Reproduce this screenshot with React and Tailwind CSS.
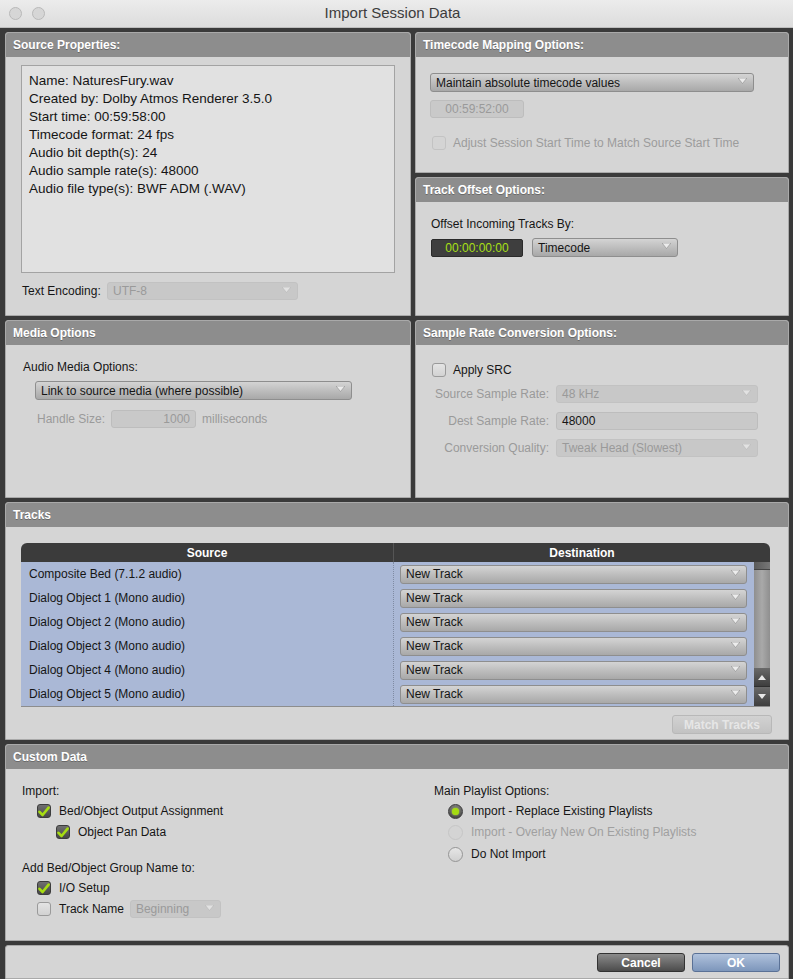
import React from 'react';

const font = { fontFamily: '"Liberation Sans", Arial, sans-serif' };

const Arrow = ({ dim }) => (
    <svg width="9" height="6" viewBox="0 0 9 6" className="mr-[6px] mt-[4px] shrink-0 self-start">
        <path d="M0 0 H9 L4.5 5.5 Z" fill={dim ? '#e2e2e2' : '#ececec'} stroke={dim ? '#b5b5b5' : '#8a8a8a'} strokeWidth="0.6" />
    </svg>
);

const Select = ({ label, className = '', disabled }) => (
    <div
        className={`flex items-center rounded-[3px] border pl-[5px] text-[12px] leading-none ${
            disabled
                ? 'border-[#c2c2c2] bg-[#c8c8c8] text-[#9a9a9a]'
                : 'border-[#8e8e8e] bg-gradient-to-b from-[#d4d4d4] to-[#a8a8a8] text-[#151515]'
        } ${className}`}
    >
        <span className="flex-1 whitespace-nowrap">{label}</span>
        <Arrow dim={disabled} />
    </div>
);

const Field = ({ children, className = '' }) => (
    <div className={`flex items-center rounded-[3px] border border-[#bdbdbd] bg-[#c9c9c9] px-[5px] text-[12px] leading-none ${className}`}>
        {children}
    </div>
);

const Check = ({ checked, disabled }) =>
    checked ? (
        <div className="flex h-[14px] w-[14px] shrink-0 items-center justify-center rounded-[3px] border border-[#3c3c3c] bg-gradient-to-b from-[#707070] to-[#474747]">
            <svg width="12" height="11" viewBox="0 0 12 11">
                <path d="M1.5 5.8 L4.6 9 L10.6 1.6" fill="none" stroke="#a6dc12" strokeWidth="2.6" strokeLinecap="round" strokeLinejoin="round" />
            </svg>
        </div>
    ) : (
        <div
            className={`h-[14px] w-[14px] shrink-0 rounded-[3px] border ${
                disabled ? 'border-[#c3c3c3] bg-[#d4d4d4]' : 'border-[#9a9a9a] bg-gradient-to-b from-[#e4e4e4] to-[#d2d2d2]'
            }`}
        />
    );

const Radio = ({ on, disabled }) =>
    on ? (
        <div className="flex h-[15px] w-[15px] shrink-0 items-center justify-center rounded-full border border-[#3a3a3a] bg-gradient-to-b from-[#7a7a7a] to-[#464646]">
            <div className="h-[7px] w-[7px] rounded-full bg-[#a4dc10] shadow-[0_0_2px_#c8f050]" />
        </div>
    ) : (
        <div
            className={`h-[15px] w-[15px] shrink-0 rounded-full border ${
                disabled ? 'border-[#c6c6c6] bg-[#d4d4d4]' : 'border-[#959595] bg-gradient-to-b from-[#e6e6e6] to-[#d0d0d0]'
            }`}
        />
    );

const Panel = ({ title, className = '', bodyClass = '', children }) => (
    <div className={`flex flex-col overflow-hidden rounded-t-[3px] border border-[#a9a9a9] bg-[#d5d5d5] ${className}`}>
        <div className="flex h-[24px] shrink-0 items-center bg-[#8d8d8d] pl-[7px] text-[12px] font-bold text-white [text-shadow:0_1px_0_#6a6a6a]">
            {title}
        </div>
        <div className={`flex-1 ${bodyClass}`}>{children}</div>
    </div>
);

const sourceLines = [
    'Name: NaturesFury.wav',
    'Created by: Dolby Atmos Renderer 3.5.0',
    'Start time: 00:59:58:00',
    'Timecode format: 24 fps',
    'Audio bit depth(s): 24',
    'Audio sample rate(s): 48000',
    'Audio file type(s): BWF ADM (.WAV)',
];

const tracks = [
    'Composite Bed (7.1.2 audio)',
    'Dialog Object 1 (Mono audio)',
    'Dialog Object 2 (Mono audio)',
    'Dialog Object 3 (Mono audio)',
    'Dialog Object 4 (Mono audio)',
    'Dialog Object 5 (Mono audio)',
];

export default function App() {
    return (
        <div className="flex h-[979px] w-[793px] flex-col overflow-hidden bg-[#3a3a3a] text-[#151515]" style={font}>
            {/* title bar */}
            <div className="flex h-[28px] shrink-0 items-center border-b border-[#bdbdbd] bg-gradient-to-b from-[#ececec] to-[#dcdcdc] px-[9px]">
                <div className="flex gap-[10px]">
                    <div className="h-[13px] w-[13px] rounded-full border border-[#b9b9b9] bg-[#d6d6d6]" />
                    <div className="h-[13px] w-[13px] rounded-full border border-[#b9b9b9] bg-[#d6d6d6]" />
                </div>
                <div className="flex-1 pr-[44px] text-center text-[15px] text-[#3c3c3c]">Import Session Data</div>
            </div>

            <div className="flex flex-1 flex-col gap-[4px] pl-[5px] pr-[4px] pt-[4px]">
                {/* row 1 */}
                <div className="flex h-[284px] gap-[4px]">
                    <Panel title="Source Properties:" className="w-[406px]" bodyClass="px-[15px] pt-[8px]">
                        <div className="h-[208px] border border-[#a3a3a3] bg-[#e1e1e1] pl-[7px] pt-[6px] text-[13.5px] leading-[18px]">
                            {sourceLines.map((l) => (
                                <div key={l}>{l}</div>
                            ))}
                        </div>
                        <div className="mt-[9px] flex h-[18px] items-center">
                            <span className="w-[86px] pl-[1px] text-[12px]">Text Encoding:</span>
                            <Select label="UTF-8" disabled className="h-[18px] w-[191px]" />
                        </div>
                    </Panel>

                    <div className="flex flex-1 flex-col gap-[4px]">
                        <Panel title="Timecode Mapping Options:" className="h-[141px]" bodyClass="pl-[14px] pt-[16px]">
                            <Select label="Maintain absolute timecode values" className="h-[19px] w-[324px]" />
                            <Field className="mt-[8px] h-[18px] w-[94px] justify-center text-[#9a9a9a]">00:59:52:00</Field>
                            <div className="mt-[16px] flex items-center gap-[7px] pl-[2px] text-[12px] text-[#9c9c9c]">
                                <Check disabled />
                                <span>Adjust Session Start Time to Match Source Start Time</span>
                            </div>
                        </Panel>
                        <Panel title="Track Offset Options:" className="flex-1" bodyClass="pl-[15px] pt-[14px]">
                            <div className="h-[16px] text-[12px] leading-[16px]">Offset Incoming Tracks By:</div>
                            <div className="mt-[6px] flex items-center gap-[9px]">
                                <div className="flex h-[18px] w-[92px] items-center justify-center rounded-[2px] border border-[#2a2a2a] bg-[#3e3e3e] text-[12px] text-[#a8e014]">
                                    00:00:00:00
                                </div>
                                <Select label="Timecode" className="h-[19px] w-[146px]" />
                            </div>
                        </Panel>
                    </div>
                </div>

                {/* row 2 */}
                <div className="flex h-[178px] gap-[4px]">
                    <Panel title="Media Options" className="w-[406px]" bodyClass="pl-[17px] pt-[14px]">
                        <div className="h-[16px] text-[12px] leading-[16px]">Audio Media Options:</div>
                        <Select label="Link to source media (where possible)" className="ml-[12px] mt-[6px] h-[19px] w-[317px]" />
                        <div className="mt-[10px] flex items-center pl-[14px] text-[12px] text-[#9a9a9a]">
                            <span className="w-[74px]">Handle Size:</span>
                            <Field className="h-[18px] w-[85px] justify-end">1000</Field>
                            <span className="ml-[6px]">milliseconds</span>
                        </div>
                    </Panel>

                    <Panel title="Sample Rate Conversion Options:" className="flex-1" bodyClass="pt-[17px]">
                        <div className="flex h-[16px] items-center gap-[7px] pl-[16px] text-[12px]">
                            <Check />
                            <span>Apply SRC</span>
                        </div>
                        <div className="mt-[7px] flex flex-col gap-[9px] text-[12px] text-[#9a9a9a]">
                            <div className="flex items-center">
                                <span className="w-[140px] pr-[7px] text-right">Source Sample Rate:</span>
                                <Select label="48 kHz" disabled className="h-[18px] w-[202px]" />
                            </div>
                            <div className="flex items-center">
                                <span className="w-[140px] pr-[7px] text-right">Dest Sample Rate:</span>
                                <Field className="h-[18px] w-[202px] text-[#151515]">48000</Field>
                            </div>
                            <div className="flex items-center">
                                <span className="w-[140px] pr-[7px] text-right">Conversion Quality:</span>
                                <Select label="Tweak Head (Slowest)" disabled className="h-[18px] w-[202px]" />
                            </div>
                        </div>
                    </Panel>
                </div>

                {/* tracks */}
                <Panel title="Tracks" className="h-[238px]" bodyClass="pl-[15px] pr-[15px] pt-[16px]">
                    <div className="w-[749px] overflow-hidden rounded-t-[6px] border-b border-[#8d8d8d]">
                        <div className="flex h-[19px] bg-[#3b3b3b] text-[12px] font-bold text-white">
                            <div className="flex w-[373px] items-center justify-center border-r border-[#555]">Source</div>
                            <div className="flex flex-1 items-center justify-center">Destination</div>
                        </div>
                        <div className="flex bg-[#aab8d6]">
                            <div className="w-[373px] border-r border-dotted border-[#7f8ba3]">
                                {tracks.map((t) => (
                                    <div key={t} className="flex h-[24px] items-center pl-[8px] text-[12px]">
                                        {t}
                                    </div>
                                ))}
                            </div>
                            <div className="w-[360px]">
                                {tracks.map((t) => (
                                    <div key={t} className="flex h-[24px] items-center pl-[6px]">
                                        <Select label="New Track" className="h-[19px] w-[347px]" />
                                    </div>
                                ))}
                            </div>
                            <div className="flex w-[16px] flex-col bg-gradient-to-r from-[#8f8f8f] via-[#a9a9a9] to-[#8f8f8f]">
                                <div className="h-[8px] border-b border-[#444] bg-gradient-to-r from-[#5a5a5a] to-[#777]" />
                                <div className="flex-1" />
                                <div className="flex h-[19px] items-center justify-center border-b border-[#2e2e2e] bg-gradient-to-b from-[#6a6a6a] to-[#3e3e3e]">
                                    <svg width="8" height="5" viewBox="0 0 8 5"><path d="M0 5 L4 0 L8 5 Z" fill="#e8e8e8" /></svg>
                                </div>
                                <div className="flex h-[19px] items-center justify-center bg-gradient-to-b from-[#6a6a6a] to-[#3e3e3e]">
                                    <svg width="8" height="5" viewBox="0 0 8 5"><path d="M0 0 L8 0 L4 5 Z" fill="#e8e8e8" /></svg>
                                </div>
                            </div>
                        </div>
                    </div>
                    <div className="mt-[8px] flex w-[751px] justify-end">
                        <div className="flex h-[19px] w-[100px] items-center justify-center rounded-[3px] border border-[#b8b8b8] bg-gradient-to-b from-[#d2d2d2] to-[#c2c2c2] text-[12px] font-bold text-[#e6e6e6]">
                            Match Tracks
                        </div>
                    </div>
                </Panel>

                {/* custom data */}
                <Panel title="Custom Data" className="h-[197px]" bodyClass="flex pl-[16px] pt-[14px] text-[12px]">
                    <div className="w-[412px]">
                        <div className="h-[16px] leading-[16px]">Import:</div>
                        <div className="mt-[3px] flex h-[18px] items-center gap-[8px] pl-[15px]">
                            <Check checked />
                            <span>Bed/Object Output Assignment</span>
                        </div>
                        <div className="mt-[3px] flex h-[18px] items-center gap-[8px] pl-[34px]">
                            <Check checked />
                            <span>Object Pan Data</span>
                        </div>
                        <div className="mt-[19px] h-[16px] leading-[16px]">Add Bed/Object Group Name to:</div>
                        <div className="mt-[3px] flex h-[18px] items-center gap-[8px] pl-[15px]">
                            <Check checked />
                            <span>I/O Setup</span>
                        </div>
                        <div className="mt-[3px] flex h-[18px] items-center gap-[8px] pl-[15px]">
                            <Check />
                            <span>Track Name</span>
                            <Select label="Beginning" disabled className="ml-[-2px] h-[18px] w-[91px]" />
                        </div>
                    </div>
                    <div>
                        <div className="h-[16px] leading-[16px]">Main Playlist Options:</div>
                        <div className="mt-[3px] flex h-[18px] items-center gap-[8px] pl-[14px]">
                            <Radio on />
                            <span>Import - Replace Existing Playlists</span>
                        </div>
                        <div className="mt-[3px] flex h-[18px] items-center gap-[8px] pl-[14px] text-[#a0a0a0]">
                            <Radio disabled />
                            <span>Import - Overlay New On Existing Playlists</span>
                        </div>
                        <div className="mt-[4px] flex h-[18px] items-center gap-[8px] pl-[14px]">
                            <Radio />
                            <span>Do Not Import</span>
                        </div>
                    </div>
                </Panel>

                {/* buttons */}
                <div className="flex flex-1 justify-end gap-[7px] rounded-t-[3px] border border-[#a9a9a9] bg-[#d5d5d5] pr-[8px] pt-[7px]">
                    <div className="flex h-[19px] w-[88px] items-center justify-center rounded-[3px] border border-[#333] bg-gradient-to-b from-[#8c8c8c] to-[#4c4c4c] text-[12px] font-bold text-white">
                        Cancel
                    </div>
                    <div className="flex h-[19px] w-[88px] items-center justify-center rounded-[3px] border border-[#5a7196] bg-gradient-to-b from-[#b0c2dc] to-[#7d96bb] text-[12px] font-bold text-white">
                        OK
                    </div>
                </div>
            </div>
        </div>
    );
}
